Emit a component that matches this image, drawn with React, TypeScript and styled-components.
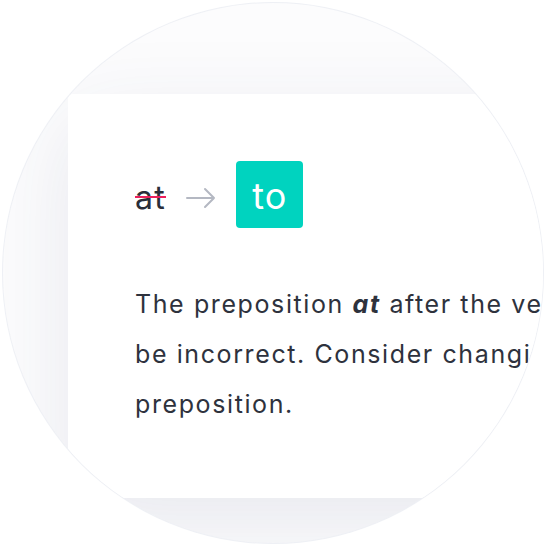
import React from 'react';
import styled, { createGlobalStyle } from 'styled-components';

const GlobalStyle = createGlobalStyle`
  html, body {
    margin: 0;
    padding: 0;
    background: #ffffff;
  }
  body {
    font-family: Inter, "Noto Sans", sans-serif;
    -webkit-font-smoothing: antialiased;
  }
`;

const Page = styled.div`
  width: 546px;
  height: 546px;
  display: flex;
  align-items: center;
  justify-content: center;
`;

const Circle = styled.div`
  width: 542px;
  height: 542px;
  box-sizing: border-box;
  border-radius: 50%;
  border: 1px solid rgba(222, 226, 234, 0.45);
  background: #fcfcfd;
  overflow: hidden;
  padding: 91px 0 0 65px;
`;

const Card = styled.div`
  width: 620px;
  height: 404px;
  box-sizing: border-box;
  background: #ffffff;
  border-radius: 5px 0 0 5px;
  box-shadow: 0 26px 90px rgba(46, 58, 110, 0.1);
  padding: 67px 0 0 67px;
  color: #2a2e39;
`;

const Suggestion = styled.div`
  display: flex;
  align-items: center;
  gap: 20px;
  height: 67px;
`;

const Removed = styled.span`
  position: relative;
  font-size: 32px;
  line-height: 1;
  letter-spacing: 1.4px;
  margin-top: 6px;
  &::after {
    content: '';
    position: absolute;
    left: 0;
    right: 0;
    top: 50%;
    height: 2px;
    margin-top: -2px;
    background: #ec1f5c;
  }
`;

const Arrow = styled.svg`
  width: 30px;
  height: 22px;
  margin-top: 6px;
`;

const Replacement = styled.div`
  width: 67px;
  height: 67px;
  border-radius: 4px;
  background: #00d3bf;
  color: #ffffff;
  font-size: 36px;
  font-weight: 400;
  letter-spacing: 1px;
  display: flex;
  align-items: center;
  justify-content: center;
  padding-top: 2px;
  box-sizing: border-box;
`;

const Explanation = styled.p`
  margin: 51px 0 0;
  font-size: 25px;
  line-height: 50px;
  letter-spacing: 1.6px;
  white-space: nowrap;
  color: #2e323d;
  em {
    font-weight: 700;
    font-style: italic;
  }
`;

export default function App() {
  return (
    <>
      <GlobalStyle />
      <Page>
        <Circle>
          <Card>
            <Suggestion>
              <Removed>at</Removed>
              <Arrow viewBox="0 0 30 22" fill="none">
                <path
                  d="M1 11 H28 M19 2 L28 11 L19 20"
                  stroke="#b4b8c2"
                  strokeWidth="2"
                  strokeLinecap="round"
                  strokeLinejoin="round"
                />
              </Arrow>
              <Replacement>to</Replacement>
            </Suggestion>
            <Explanation>
              The preposition <em>at</em> after the verb looks may
              <br />
              be incorrect. Consider changing the
              <br />
              preposition.
            </Explanation>
          </Card>
        </Circle>
      </Page>
    </>
  );
}
